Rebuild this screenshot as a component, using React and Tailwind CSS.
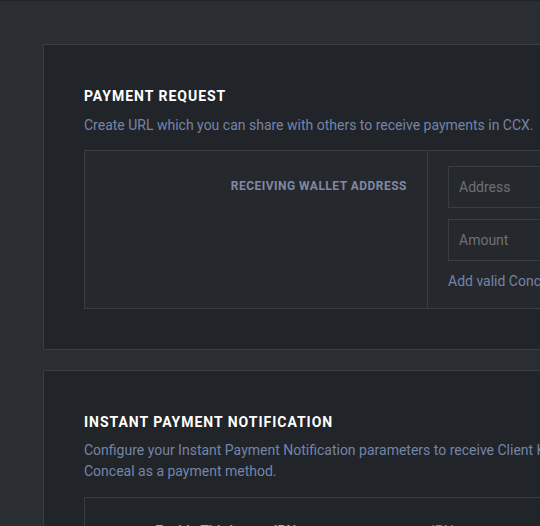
import React from "react";

const Section = ({ title, children }) => {
    return (
        <div className="w-[1000px] shrink-0 bg-[#212428] border border-[#393c41] pt-[41px] px-[40px] pb-[40px]">
            <h2 className="text-[14px] leading-[20px] font-bold tracking-[0.07em] text-white uppercase">{title}</h2>
            {children}
        </div>
    );
};

const Input = ({ placeholder }) => {
    return (
        <input
            placeholder={placeholder}
            className="w-[400px] h-[42px] bg-transparent border border-[#393c41] px-[10px] text-[14px] text-white placeholder:text-[#6d7177] outline-none"
        />
    );
};

const App = () => {
    return (
        <div className="w-full h-[526px] overflow-hidden bg-[#2a2d32] border-t border-[#202327] font-['Roboto',sans-serif]">
            <div className="flex flex-col gap-[20px] pl-[43px] pt-[43px]">
                <Section title="Payment Request">
                    <p className="mt-[9px] text-[14px] leading-[21px] text-[#7584a8]">
                        Create URL which you can share with others to receive payments in CCX.
                    </p>
                    <div className="mt-[14px] flex bg-[#25282d] border border-[#393c41]">
                        <div className="w-[343px] shrink-0 border-r border-[#393c41] pt-[22px] pr-[20px] text-right">
                            <span className="text-[12px] leading-[16px] font-bold tracking-[0.04em] text-[#7f89a6]">RECEIVING WALLET ADDRESS</span>
                        </div>
                        <div className="flex flex-col pl-[20px] pt-[15px] pb-[16px]">
                            <Input placeholder="Address" />
                            <div className="mt-[11px]">
                                <Input placeholder="Amount" />
                            </div>
                            <p className="mt-[10px] text-[14px] leading-[21px] text-[#7584a8]">
                                Add valid Conceal wallet address and amount to generate payment request URL.
                            </p>
                        </div>
                    </div>
                </Section>
                <Section title="Instant Payment Notification">
                    <p className="mt-[8px] text-[14px] leading-[21px] text-[#7584a8]">
                        Configure your Instant Payment Notification parameters to receive Client Key and Secret for using
                        <br />
                        Conceal as a payment method.
                    </p>
                    <div className="mt-[15px] flex bg-[#212428] border border-[#393c41] h-[200px]">
                        <div className="flex items-start pt-[23px] pl-[70px] gap-[135px] text-[14px] leading-[21px]">
                            <span className="text-[#f0a020] font-medium">Enable Third-party IPN</span>
                            <span className="text-[#7f89a6]">IPN status</span>
                        </div>
                    </div>
                </Section>
            </div>
        </div>
    );
};

export default App;
